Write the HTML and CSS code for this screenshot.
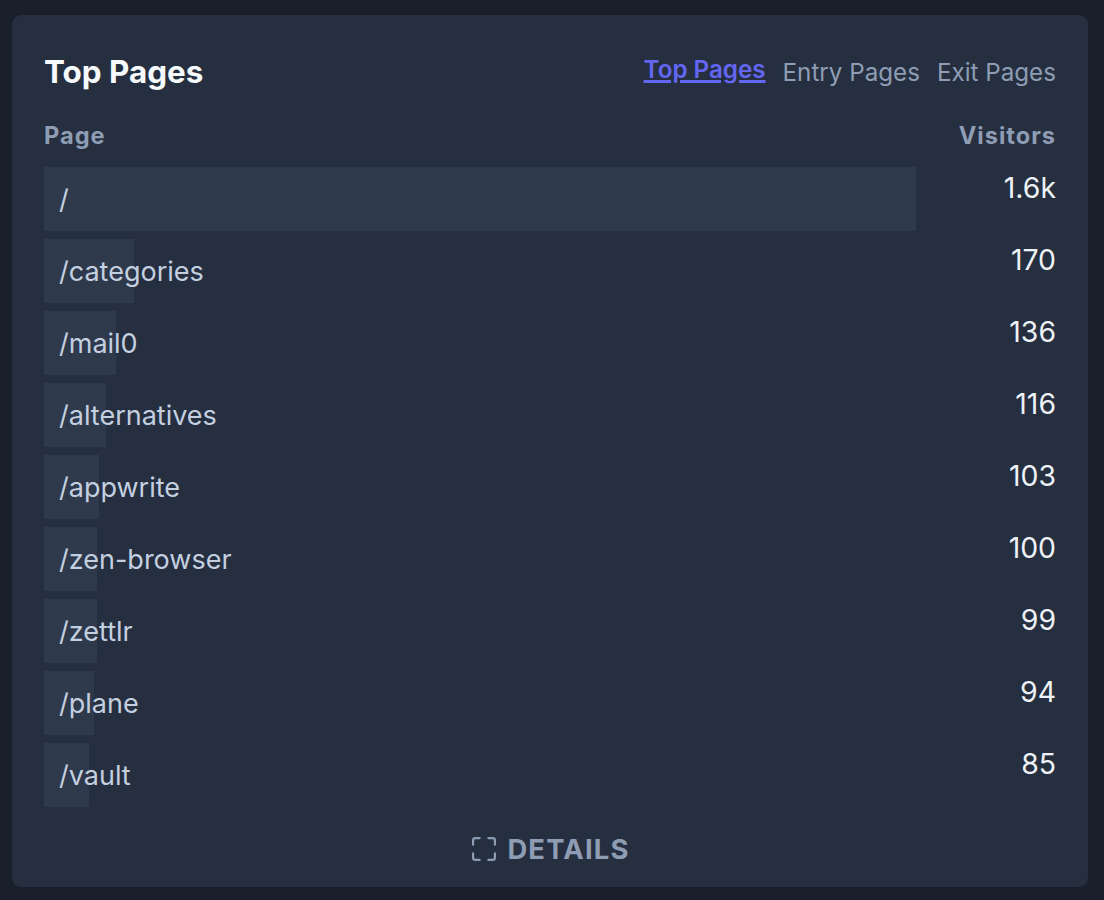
FILE: index.html
```html
<!DOCTYPE html>
<html lang="en">
<head>
<meta charset="utf-8">
<title>Top Pages</title>
<link rel="stylesheet" href="styles.css">
</head>
<body>
<main class="card">
  <header class="head">
    <h1 class="title">Top Pages</h1>
    <nav class="tabs">
      <a class="tab active">Top Pages</a>
      <a class="tab">Entry Pages</a>
      <a class="tab">Exit Pages</a>
    </nav>
  </header>
  <div class="cols"><span>Page</span><span>Visitors</span></div>
  <ul class="rows">
    <li class="row"><div class="cell"><div class="bar" style="width:872px"></div><span class="name">/</span></div><span class="val">1.6k</span></li>
    <li class="row"><div class="cell"><div class="bar" style="width:90px"></div><span class="name">/categories</span></div><span class="val">170</span></li>
    <li class="row"><div class="cell"><div class="bar" style="width:72px"></div><span class="name">/mail0</span></div><span class="val">136</span></li>
    <li class="row"><div class="cell"><div class="bar" style="width:62px"></div><span class="name">/alternatives</span></div><span class="val">116</span></li>
    <li class="row"><div class="cell"><div class="bar" style="width:55px"></div><span class="name">/appwrite</span></div><span class="val">103</span></li>
    <li class="row"><div class="cell"><div class="bar" style="width:53px"></div><span class="name">/zen-browser</span></div><span class="val">100</span></li>
    <li class="row"><div class="cell"><div class="bar" style="width:53px"></div><span class="name">/zettlr</span></div><span class="val">99</span></li>
    <li class="row"><div class="cell"><div class="bar" style="width:50px"></div><span class="name">/plane</span></div><span class="val">94</span></li>
    <li class="row"><div class="cell"><div class="bar" style="width:45px"></div><span class="name">/vault</span></div><span class="val">85</span></li>
  </ul>
  <footer class="foot">
    <svg class="icon" viewBox="1 1 22 22" fill="none" stroke="currentColor" stroke-width="2" stroke-linecap="round" stroke-linejoin="round"><path d="M8 2H4a2 2 0 0 0-2 2v4"/><path d="M16 2h4a2 2 0 0 1 2 2v4"/><path d="M22 16v4a2 2 0 0 1-2 2h-4"/><path d="M8 22H4a2 2 0 0 1-2-2v-4"/></svg>
    <span class="details">DETAILS</span>
  </footer>
</main>
</body>
</html>
```
FILE: styles.css
```css
* { box-sizing: border-box; }
html, body { margin: 0; height: 900px; overflow: hidden; }
body {
  background: #19202c;
  padding: 15px 16px 13px 12px;
  font-family: Inter, "Noto Sans", sans-serif;
}
.card {
  height: 872px;
  background: #252f3f;
  border-radius: 9px;
  padding: 32px 32px 0 32px;
  display: flex;
  flex-direction: column;
}
.head { display: flex; justify-content: space-between; align-items: center; height: 50px; }
.title { margin: 0; font-size: 31.4px; line-height: 50px; font-weight: 700; color: #f7fafc; }
.tabs { display: flex; gap: 17px; font-size: 24.2px; color: #8e9db4; align-items: center; }
.tab.active { color: #6366f1; font-weight: 600; text-decoration: underline; text-decoration-thickness: 3px; position: relative; top: -3px; }
.cols {
  display: flex; justify-content: space-between;
  margin-top: 25px; height: 28px; line-height: 28px;
  font-size: 23.6px; font-weight: 700; letter-spacing: 1px; color: #8e9db4;
}
.rows { list-style: none; margin: 17px 0 0; padding: 0; display: flex; flex-direction: column; gap: 8px; }
.row { display: flex; justify-content: space-between; height: 64px; }
.cell { position: relative; width: 872px; height: 64px; }
.bar { position: absolute; inset: 0 auto 0 0; background: #2e394b; }
.name { position: absolute; left: 15px; top: 0; line-height: 66px; font-size: 27px; color: #c4d0e0; }
.val { font-size: 28.4px; line-height: 41px; color: #eef2f7; }
.foot { display: flex; justify-content: center; align-items: center; gap: 11px; margin-top: 24px; color: #8e9db4; }
.icon { width: 24px; height: 24px; margin-left: 2px; }
.details { font-size: 27.4px; font-weight: 700; letter-spacing: 1.2px; line-height: 36px; }
```
